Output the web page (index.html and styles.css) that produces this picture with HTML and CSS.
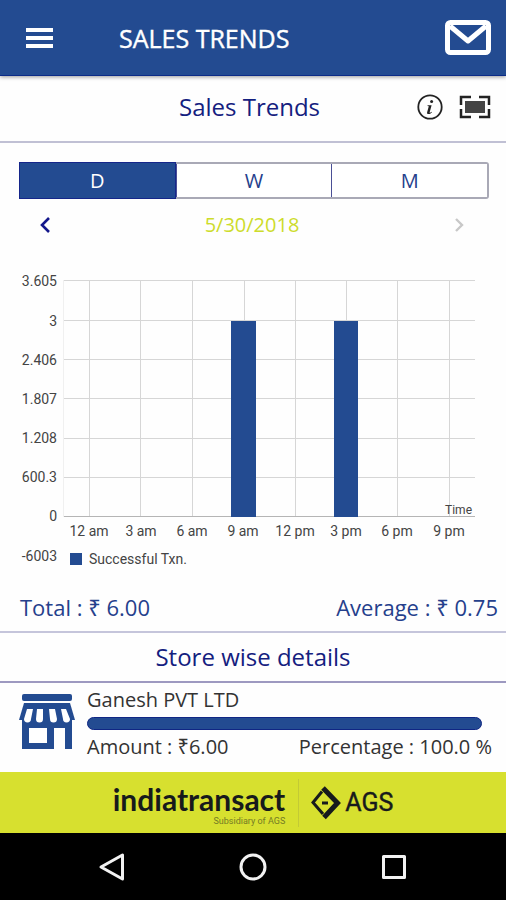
FILE: index.html
```html
<!DOCTYPE html>
<html lang="en">
<head>
<meta charset="utf-8">
<meta name="viewport" content="width=device-width, initial-scale=1">
<title>Sales Trends</title>
<link rel="stylesheet" href="styles.css">
</head>
<body>
<header class="app-bar">
  <button class="icon-button" type="button" aria-label="Menu">
    <svg width="28" height="22" viewBox="0 0 28 22" fill="#fff"><path d="M0 1h27v4H0zM0 9h27v4H0zM0 17h27v4H0z"/></svg>
  </button>
  <h1 class="app-title">SALES TRENDS</h1>
  <button class="icon-button" type="button" aria-label="Messages">
    <svg width="46" height="35" viewBox="0 0 46 35" fill="none" stroke="#fff" stroke-width="5" stroke-linejoin="round"><rect x="2.5" y="2.5" width="41" height="30" rx="3"/><path d="M5 6l18 15L41 6"/></svg>
  </button>
</header>
<main class="content">
  <section class="section-head">
    <h2 class="section-title">Sales Trends</h2>
    <div class="section-tools">
      <button class="icon-button" type="button" aria-label="Information">
        <svg width="26" height="26" viewBox="0 0 26 26"><circle cx="13" cy="13" r="11.7" fill="none" stroke="#222" stroke-width="1.8"/><circle cx="14.6" cy="7.6" r="1.5" fill="#222"/><path d="M10.6 11.3h4l-2 7.1c0 .7 1 .2 2-.7l.4.5c-1.5 1.7-3 2-4.2 1.7-.8-.3-.9-1-.6-2l1.6-5.7-1.3-.3z" fill="#222"/></svg>
      </button>
      <button class="icon-button" type="button" aria-label="Full screen">
        <svg width="32" height="24" viewBox="0 0 32 24" fill="none" stroke="#222" stroke-width="2.5"><path d="M2 10V2h10M20 2h10v8M30 14v8H20M12 22H2v-8"/><rect x="6" y="6" width="20" height="12" fill="#444" stroke="none"/></svg>
      </button>
    </div>
  </section>
  <div class="range-tabs">
    <button class="range-tab range-tab-active" type="button">D</button>
    <button class="range-tab" type="button">W</button>
    <button class="range-tab" type="button">M</button>
  </div>
  <div class="date-row">
    <button class="icon-button" type="button" aria-label="Previous day">
      <svg width="12" height="18" viewBox="0 0 12 18" fill="none" stroke="#14188c" stroke-width="2.6"><path d="M10 2L3 9l7 7"/></svg>
    </button>
    <time class="date" datetime="2018-05-30">5/30/2018</time>
    <button class="icon-button" type="button" aria-label="Next day" disabled>
      <svg width="12" height="18" viewBox="0 0 12 18" fill="none" stroke="#c8c8c8" stroke-width="2.4"><path d="M3 3l6 6-6 6"/></svg>
    </button>
  </div>
  <svg class="chart" viewBox="0 0 506 330" role="img" aria-label="Successful transactions by time">
    <path class="grid-faint" d="M63.500 30V267"/>
    <path class="grid" d="M64 30.500H475M64 70.500H475M64 109.500H475M64 148.500H475M64 188.500H475M64 227.500H475M89.500 30V267M140.500 30V267M192.500 30V267M244.500 30V267M295.500 30V267M346.500 30V267M397.500 30V267M449.500 30V267"/>
    <path class="axis" d="M64 266.500H475"/>
    <rect class="bar" x="231" y="71" width="25" height="196"/>
    <rect class="bar" x="334" y="71" width="24" height="196"/>
    <g class="label label-y">
      <text x="57" y="36">3.605</text><text x="57" y="76">3</text><text x="57" y="115">2.406</text><text x="57" y="154">1.807</text><text x="57" y="193">1.208</text><text x="57" y="232">600.3</text><text x="57" y="271">0</text><text x="57" y="311">-6003</text>
    </g>
    <g class="label label-x">
      <text x="89" y="286">12 am</text><text x="141" y="286">3 am</text><text x="192" y="286">6 am</text><text x="243" y="286">9 am</text><text x="295" y="286">12 pm</text><text x="346" y="286">3 pm</text><text x="397" y="286">6 pm</text><text x="449" y="286">9 pm</text>
    </g>
    <text class="axis-name" x="472" y="264">Time</text>
    <rect class="bar" x="70" y="303" width="12" height="12"/>
    <text class="label" x="89" y="314">Successful Txn.</text>
  </svg>
  <div class="totals"><span>Total : ₹ 6.00</span><span>Average : ₹ 0.75</span></div>
  <h2 class="section-title store-title">Store wise details</h2>
  <article class="store">
    <svg class="store-icon" width="56" height="57" viewBox="0 0 56 57">
      <g fill="#234b91"><rect x="3" y="1" width="50" height="7" rx="2"/><path d="M5 10h46l5 17H0z"/><path d="M3 27h50v29h-7V35H35v21H3z"/></g>
      <g fill="#fff"><rect x="10" y="35" width="18" height="15"/><path d="M8 16h6l-2 10a3 3 0 0 1-7 0zM18 16h6v10a3 3 0 0 1-7 0zM30 16h6l2 10a3 3 0 0 1-7 0zM42 16h5l4 10a3 3 0 0 1-7 0z"/></g>
    </svg>
    <div class="store-info">
      <h3 class="store-name">Ganesh PVT LTD</h3>
      <div class="track"><div class="track-fill" style="width:100%"></div></div>
      <div class="store-stats"><span>Amount : ₹6.00</span><span>Percentage : 100.0 %</span></div>
    </div>
  </article>
</main>
<footer class="brand">
  <div class="brand-main"><span class="brand-name">indiatransact</span><span class="brand-note">Subsidiary of AGS</span></div>
  <div class="brand-ags">
    <svg width="30" height="34" viewBox="0 0 30 34" fill="none" stroke="#171a1c"><path d="M11 5.500L2 16.500 12 28" stroke-width="3"/><path d="M12 2l14.500 15L13 31.500" stroke-width="5"/><path d="M11 17h6" stroke-width="3"/></svg>
    <span class="ags-name">AGS</span>
  </div>
</footer>
<nav class="system-nav">
  <button class="icon-button" type="button" aria-label="Back"><svg width="28" height="30" viewBox="0 0 28 30" fill="none" stroke="#f2f2f2" stroke-width="3" stroke-linejoin="round"><path d="M24.500 3v24L3 15z"/></svg></button>
  <button class="icon-button" type="button" aria-label="Home"><svg width="28" height="30" viewBox="0 0 28 30" fill="none" stroke="#f2f2f2" stroke-width="3"><circle cx="14" cy="15" r="12"/></svg></button>
  <button class="icon-button" type="button" aria-label="Recent apps"><svg width="28" height="30" viewBox="0 0 28 30" fill="none" stroke="#f2f2f2" stroke-width="3" stroke-linejoin="round"><rect x="3.500" y="4.500" width="21" height="21"/></svg></button>
</nav>
</body>
</html>
```
FILE: styles.css
```css
* { box-sizing: border-box; }
body {
  margin: 0;
  min-height: 100vh;
  display: flex;
  flex-direction: column;
  background: #fefefe;
  color: #333;
  font-family: "Open Sans", "Noto Sans", sans-serif;
}
h1, h2, h3 { margin: 0; font-weight: 400; }
svg { display: block; }
button { font: inherit; margin: 0; cursor: pointer; }
.icon-button { padding: 0; border: 0; background: none; }
.app-bar {
  display: flex;
  align-items: center;
  height: 76px;
  padding: 0 15px 0 26px;
  background: #234b91;
  border-bottom: 1px solid #0c2c88;
  box-shadow: 0 1px 4px rgba(0, 0, 0, .4);
}
.app-title {
  flex: 1;
  margin-left: 65px;
  color: #fff;
  font-size: 25px;
  line-height: 36px;
  -webkit-text-stroke: 0.4px #fff;
}
.content { flex: 1; }
.section-head {
  display: grid;
  grid-template-columns: 1fr auto 1fr;
  align-items: center;
  height: 67px;
  padding: 0 15px 4px 8px;
  border-bottom: 2px solid #c0c0d4;
}
.section-title { color: #14207f; font-size: 24px; line-height: 32px; text-align: center; }
.section-head .section-title { grid-column: 2; }
.section-tools { display: flex; align-items: center; justify-content: flex-end; gap: 16px; }
.range-tabs {
  display: flex;
  height: 37px;
  margin: 19px 17px 0 19px;
  border: 2px solid #a9a9b6;
  border-radius: 3px;
}
.range-tab {
  flex: 1;
  padding: 0;
  border: 0;
  border-left: 1px solid #4a4f95;
  background: #fff;
  color: #25408c;
  font-size: 20px;
  line-height: 30px;
}
.range-tab-active { margin: -2px 0 -2px -2px; border: 1px solid #15268a; background: #234b91; color: #fff; }
.date-row {
  display: flex;
  align-items: center;
  justify-content: space-between;
  height: 51px;
  padding: 0 41px 0 39px;
}
.date { color: #cddc2b; font-size: 20px; line-height: 28px; }
.chart { width: 100%; height: auto; font-family: Roboto, sans-serif; }
.grid { fill: none; stroke: #d6d6d6; }
.grid-faint { fill: none; stroke: #f0f0f0; }
.axis { fill: none; stroke: #b5b5b5; }
.bar { fill: #234b91; }
.label { font-size: 14px; fill: #444; }
.label-y { text-anchor: end; }
.label-x { text-anchor: middle; }
.axis-name { font-size: 12px; fill: #444; text-anchor: end; }
.totals {
  display: flex;
  justify-content: space-between;
  align-items: center;
  height: 53px;
  padding: 2px 8px 0 20px;
  border-bottom: 2px solid #c5c5db;
  color: #25408c;
  font-size: 22px;
  line-height: 32px;
}
.store-title { padding: 8px 0; border-bottom: 2px solid #9d99c0; }
.store { display: flex; align-items: flex-start; gap: 12px; padding: 4px 14px 12px 19px; }
.store-icon { flex: none; margin-top: 6px; }
.store-info { flex: 1; font-size: 20px; line-height: 26px; }
.store-name { font-size: 20px; line-height: 26px; }
.track { height: 13px; margin: 4px 10px 4px 0; }
.track-fill { height: 100%; border: 1px solid #102684; border-radius: 7px; background: #234b91; }
.store-stats { display: flex; justify-content: space-between; }
.brand {
  display: flex;
  justify-content: center;
  align-items: center;
  height: 61px;
  background: #d7e02f;
  color: #171a1c;
}
.brand-main { display: flex; flex-direction: column; padding: 4px 13px 0 0; border-right: 1px solid #c3ca35; }
.brand-name { font-family: Lato, sans-serif; font-weight: 700; font-size: 30px; line-height: 32px; }
.brand-note { color: #747b25; font: 9px/12px Roboto, sans-serif; text-align: right; }
.brand-ags { display: flex; align-items: center; gap: 4px; padding-left: 12px; }
.ags-name { font: 400 25px/32px Roboto, sans-serif; -webkit-text-stroke: 0.4px #171a1c; }
.system-nav {
  display: flex;
  justify-content: space-between;
  align-items: center;
  height: 67px;
  padding: 0 98px;
  background: #000;
}
```
